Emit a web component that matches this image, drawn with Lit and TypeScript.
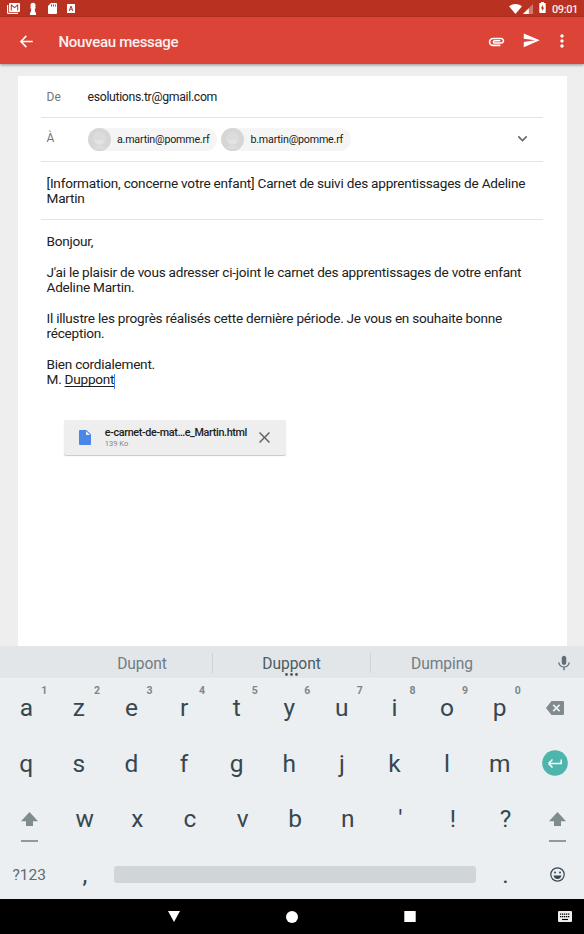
import { LitElement, html, css, svg } from "lit";
import { customElement } from "lit/decorators.js";

const icon = (cls: string, box: string, body: unknown) =>
  html`<svg class="ic ${cls}" viewBox=${box} aria-hidden="true">${body}</svg>`;

const iconStyles = css`
  :host { display: block; box-sizing: border-box; font-family: Roboto, sans-serif; }
  * { box-sizing: border-box; }
  .ic { display: block; flex: none; fill: currentColor; overflow: visible; }
`;

@customElement("status-bar")
class StatusBar extends LitElement {
  static styles = [iconStyles, css`
    .bar { height: 17px; background: #b93221; color: #fff; display: flex; align-items: center; padding: 0 6px 0 7px; }
    .mail { width: 13px; height: 11px; margin-right: 10px; }
    .pawn { width: 6px; height: 12px; margin-right: 11.500px; margin-top: 1px; }
    .sd { width: 9px; height: 11px; margin-right: 10.500px; }
    .app { width: 8px; height: 9px; }
    .gap { flex: 1; }
    .wifi { width: 13px; height: 10px; margin-right: 1px; }
    .cell { width: 10px; height: 10px; margin-right: 6px; margin-top: 1px; }
    .batt { width: 7px; height: 11px; margin: -1.500px 6px 0 0; }
    .time { font-size: 11px; font-weight: 500; line-height: 17px; letter-spacing: -0.400px; color: #fbeceb; width: 26px; padding-top: 1px; white-space: nowrap; }
  `];
  render() {
    return html`<div class="bar">
      ${icon("mail", "0 0 13 11", svg`<path d="M0 2h1.200v7.800H11V11H1.200Q0 11 0 9.800z"/><path fill-rule="evenodd" d="M3 0h9q1 0 1 1v7q0 1-1 1H3q-1 0-1-1V1q0-1 1-1zM3.800 7.600h1V3l2.700 2.200L10.200 3v4.600h1V1.600h-.8L7.500 3.900 4.600 1.600h-.8z"/>`)}
      ${icon("pawn", "0 0 6 12", svg`<circle cx="3" cy="2.300" r="2.500"/><path d="M.4 4h5.200v1.500H4.800L5 8.500l1 1.500v2H0v-2l1-1.500.2-3H.4z"/>`)}
      ${icon("sd", "0 0 9 11", svg`<path fill-rule="evenodd" d="M3 0h5q1 0 1 1v9q0 1-1 1H1q-1 0-1-1V3zM3 1.400v2h1v-2zM5 1.400v2h1v-2zM7 1.400v2h.9v-2z"/>`)}
      ${icon("app", "0 0 8 9", svg`<path fill-rule="evenodd" d="M.5 0h7q.5 0 .5.500v8q0 .5-.5.500h-7Q0 9 0 8.500v-8Q0 0 .5 0zM3.400 2 1.700 7h1l.4-1.200h1.800L5.300 7h1L4.600 2zM4 3.200l.5 1.700h-1z"/>`)}
      <span class="gap"></span>
      ${icon("wifi", "0 0 13 10", svg`<path d="M0 2.200Q6.500-2.200 13 2.200L6.500 10z"/>`)}
      ${icon("cell", "0 0 10 10", svg`<path d="M10 0v10H0z" opacity=".35"/><path d="M5.800 4.200V10H0z"/>`)}
      ${icon("batt", "0 0 7 12", svg`<path fill-rule="evenodd" d="M2 0h3v1.200h1.300q.7 0 .7.700v9.400q0 .7-.7.700H.7Q0 12 0 11.300V1.900q0-.7.7-.7H2zM4 3 1.700 7h1.400v3l2.300-4H4z"/>`)}
      <span class="time">09:01</span>
    </div>`;
  }
}

@customElement("compose-toolbar")
class ComposeToolbar extends LitElement {
  static styles = [iconStyles, css`
    :host { position: relative; z-index: 1; }
    .bar { height: 47px; background: #db4437; color: #fff; display: flex; align-items: center; padding: 1px 12px 0 15px; box-shadow: 0 1px 3px rgba(0, 0, 0, .4); }
    .back { width: 23px; height: 23px; }
    .title { flex: 1; margin-left: 20.500px; padding-top: 2px; font-size: 15px; font-weight: 500; line-height: 20px; letter-spacing: -0.300px; color: #fdf0ee; }
    .clip { width: 17px; height: 17px; margin-right: 17.500px; }
    .send { width: 17.500px; height: 17.500px; margin-right: 12px; }
    .more { width: 20px; height: 20px; margin-top: -1px; }
  `];
  render() {
    return html`<div class="bar">
      ${icon("back", "0 0 24 24", svg`<path d="M18.500 11.200H8.100l4.300-4.400-1.100-1.200L5 12l6.300 6.400 1.100-1.200-4.300-4.300h10.400z"/>`)}
      <span class="title">Nouveau message</span>
      ${icon("clip", "1 1 22 22", svg`<path d="M2 12.500C2 9.460 4.460 7 7.500 7H18c2.210 0 4 1.790 4 4s-1.790 4-4 4H9.500C8.120 15 7 13.880 7 12.500S8.120 10 9.500 10H17v2H9.410c-.55 0-.55 1 0 1H18c1.100 0 2-.9 2-2s-.9-2-2-2H7.500C5.570 9 4 10.570 4 12.500S5.570 16 7.500 16H17v2H7.500C4.460 18 2 15.540 2 12.500z"/>`)}
      ${icon("send", "1 1 23 23", svg`<path d="M2.010 21 23 12 2.010 3 2 10l15 2-15 2z"/>`)}
      ${icon("more", "0 0 24 24", svg`<path d="M12 8c1.100 0 2-.9 2-2s-.9-2-2-2-2 .9-2 2 .9 2 2 2zm0 2c-1.100 0-2 .9-2 2s.9 2 2 2 2-.9 2-2-.9-2-2-2zm0 6c-1.100 0-2 .9-2 2s.9 2 2 2 2-.9 2-2-.9-2-2-2z"/>`)}
    </div>`;
  }
}

@customElement("message-card")
class MessageCard extends LitElement {
  static styles = [iconStyles, css`
    .card { height: 570px; margin: 12px 17.500px 0; padding: 0 24px 0 23.500px; background: #fff; font-size: 13.600px; line-height: 15.330px; letter-spacing: -0.240px; color: #212121; }
    .row { display: flex; align-items: center; border-bottom: 1px solid #e4e4e4; padding-left: 5.500px; }
    .from { height: 42px; padding-top: 2px; }
    .to { height: 44px; }
    .subject { height: 58px; padding-top: 1.500px; letter-spacing: -0.220px; }
    .label { width: 41px; color: #757575; font-size: 12px; letter-spacing: 0; }
    .to .label { margin-top: -2px; }
    .addr { font-size: 12.300px; letter-spacing: -0.330px; }
    .chips { display: flex; gap: 3.500px; flex: 1; }
    .chip { display: flex; align-items: center; height: 23px; border-radius: 12px; background: #f5f5f5; font-size: 10.700px; letter-spacing: -0.210px; padding-right: 8px; white-space: nowrap; }
    .face { width: 23px; height: 23px; margin-right: 6.500px; }
    .chev { width: 19px; height: 19px; margin-right: 11px; color: #666; margin-top: -3px; }
    .body { padding: 14px 0 0 5.500px; height: 167.300px; }
    .typo { text-decoration: underline; text-underline-offset: 2px; text-decoration-thickness: 1px; text-decoration-skip-ink: none; }
    .caret { display: inline-block; width: 1px; height: 15px; background: #4285f4; vertical-align: -2px; margin: -3px 0; }
    .file { display: flex; align-items: center; width: 222px; height: 35px; margin: 32.700px 0 0 22.500px; background: #eee; border-radius: 2px; box-shadow: 0 1px 1px rgba(0, 0, 0, .22); padding-left: 15px; }
    .doc { width: 12px; height: 15px; color: #4a86e8; margin-right: 14.300px; }
    .meta { width: 154.700px; margin-top: -1px; white-space: nowrap; }
    .name { font-size: 10.800px; font-weight: 500; line-height: 13px; letter-spacing: -0.370px; }
    .size { font-size: 7.500px; line-height: 9px; letter-spacing: 0; color: #858585; }
    .close { width: 11px; height: 11px; color: #666; }
  `];
  private chip(address: string) {
    return html`<span class="chip">
      ${icon("face", "0 0 23 23", svg`<circle cx="11.500" cy="11.500" r="11.500" fill="#d6d6d6"/><circle cx="11.500" cy="10.500" r="6.500" fill="#dcdcdc"/><path d="M6.500 12h10q-1 4.500-5 4.500t-5-4.500z" fill="#e3e3e3"/><path d="M5 19q6.500-3.500 13 0-6.500 4.500-13 0z" fill="#dddddd"/>`)}${address}</span>`;
  }
  render() {
    return html`<div class="card">
      <div class="row from"><span class="label">De</span><span class="addr">esolutions.tr@gmail.com</span></div>
      <div class="row to"><span class="label">À</span>
        <span class="chips">${this.chip("a.martin@pomme.rf")}${this.chip("b.martin@pomme.rf")}</span>
        ${icon("chev", "0 0 24 24", svg`<path d="M16.600 8.600 12 13.200 7.400 8.600 6 10l6 6 6-6z"/>`)}</div>
      <div class="row subject"><span>[Information, concerne votre enfant] Carnet de suivi des apprentissages de Adeline<br>Martin</span></div>
      <div class="body">Bonjour,<br><br>J'ai le plaisir de vous adresser ci-joint le carnet des apprentissages de votre enfant<br>Adeline Martin.<br><br>Il illustre les progrès réalisés cette dernière période. Je vous en souhaite bonne<br>réception.<br><br>Bien cordialement.<br>M. <span class="typo">Duppont</span><span class="caret"></span></div>
      <div class="file">
        ${icon("doc", "0 0 12 15", svg`<path fill-rule="evenodd" d="M1 0h6.500L12 4.500V14q0 1-1 1H1q-1 0-1-1V1q0-1 1-1zM7 1v4h4z"/>`)}
        <div class="meta"><div class="name">e-carnet-de-mat…e_Martin.html</div><div class="size">139 Ko</div></div>
        ${icon("close", "0 0 11 11", svg`<path d="M1.100 0 5.500 4.400 9.900 0 11 1.100 6.600 5.500 11 9.900 9.900 11 5.500 6.600 1.100 11 0 9.900 4.400 5.500 0 1.100z"/>`)}
      </div>
    </div>`;
  }
}

@customElement("soft-keyboard")
class SoftKeyboard extends LitElement {
  static styles = [iconStyles, css`
    .pad { height: 253px; background: #ebeff2; color: #37474f; }
    .suggest { height: 33px; background: #e2e6e9; border-bottom: 1px solid #eff2f4; display: flex; align-items: center; padding: 1px 13px 0 71px; font-size: 15.600px; color: #717d83; }
    .word { width: 142px; line-height: 18px; padding-top: 2px; text-align: center; letter-spacing: -0.080px; }
    .word.mid { width: 159px; margin-left: -1px; border: solid #cdd2d5; border-width: 0 1px; color: #4d5b62; position: relative; }
    .dots { position: absolute; left: 72px; top: 20px; width: 13px; height: 3px; }
    .mic { width: 14px; height: 14px; margin-left: auto; color: #5f6d74; }
    .row { display: flex; height: 55.500px; align-items: flex-start; }
    .key { width: 52.600px; flex: none; text-align: center; font-size: 24.500px; line-height: 28px; padding-top: 15px; position: relative; }
    .hint { position: absolute; left: 38.300px; top: 6px; width: 12px; font-size: 10.500px; line-height: 12px; font-weight: 700; color: #7b878c; }
    .side { flex: 1; display: flex; flex-direction: column; align-items: center; color: #7f8b8f; }
    .first { flex: none; width: 58.500px; }
    .del { width: 18px; height: 14px; margin-top: 22px; }
    .enter { width: 26px; height: 26px; margin-top: 15.700px; }
    .shift { width: 17px; height: 14px; margin-top: 21.500px; }
    .line { width: 17px; height: 1.500px; background: #92999d; margin-top: 14.500px; }
    .sym { font-size: 15.500px; line-height: 20px; margin-top: 19px; color: #5d6b71; }
    .space { width: 362px; height: 17px; border-radius: 3px; background: #d0d5d8; margin: 20.500px 3px 0; }
    .smile { width: 15px; height: 15px; margin-top: 21px; color: #37474f; }
  `];
  private key(k: string, hint = "") {
    return html`<span class="key">${k}${hint ? html`<span class="hint">${hint}</span>` : ""}</span>`;
  }
  private shift(cls: string) {
    return html`<span class="side ${cls}">${icon("shift", "0 0 17 14", svg`<path d="M8.500 0 17 9.200h-5V14H5V9.200H0z"/>`)}<span class="line"></span></span>`;
  }
  render() {
    return html`<div class="pad">
      <div class="suggest"><span class="word">Dupont</span><span class="word mid">Duppont${icon("dots", "0 0 13 3", svg`<circle cx="1.500" cy="1.500" r="1.400"/><circle cx="6.500" cy="1.500" r="1.400"/><circle cx="11.500" cy="1.500" r="1.400"/>`)}</span><span class="word">Dumping</span>
        ${icon("mic", "2 2 20 20", svg`<path d="M12 15c1.700 0 3.200-1.400 3.200-3.200V4.800C15.200 3 13.700 1.500 12 1.500S8.800 3 8.800 4.800v7C8.800 13.600 10.300 15 12 15zm6.500-4c0 3.500-3 6-6.500 6s-6.500-2.500-6.500-6H3.800c0 4 3.200 7 7.200 7.600V22.500h2v-3.900c4-.6 7.200-3.600 7.200-7.600z"/>`)}</div>
      <div class="row">${[..."azertyuiop"].map((k, i) => this.key(k, String((i + 1) % 10)))}
        <span class="side">${icon("del", "0 0 18 14", svg`<path fill-rule="evenodd" d="M5.500 0H17q1 0 1 1v12q0 1-1 1H5.500L0 7zM7.800 3.200 6.600 4.400 9.200 7 6.600 9.600l1.200 1.200 2.600-2.600 2.600 2.600 1.200-1.200L11.600 7l2.600-2.600L13 3.200l-2.600 2.600z"/>`)}</span></div>
      <div class="row">${[..."qsdfghjklm"].map((k) => this.key(k))}
        <span class="side">${icon("enter", "0 0 26 26", svg`<circle cx="13" cy="13" r="12.800" fill="#4db6ac"/><path d="M6.500 13.500 10.500 9.500M6.500 13.500l4 4M6.500 13.500H19.200V9.500" fill="none" stroke="#fff" stroke-width="1.500"/>`)}</span></div>
      <div class="row">${this.shift("first")}${[..."wxcvbn'!?"].map((k) => this.key(k))}${this.shift("")}</div>
      <div class="row"><span class="side first"><span class="sym">?123</span></span>${this.key(",")}<span class="space"></span>${this.key(".")}
        <span class="side">${icon("smile", "0 0 15 15", svg`<circle cx="7.500" cy="7.500" r="6.700" fill="none" stroke="currentColor" stroke-width="1.200"/><circle cx="5" cy="5.500" r="1"/><circle cx="10" cy="5.500" r="1"/><path d="M3.500 8.500h8q-1 3.500-4 3.500t-4-3.500z"/>`)}</span></div>
    </div>`;
  }
}

@customElement("nav-bar")
class NavBar extends LitElement {
  static styles = [iconStyles, css`
    .bar { height: 35px; background: #000; color: #fff; display: flex; align-items: center; padding: 0 12px 0 168px; }
    .back { width: 12px; height: 11px; }
    .home { width: 12px; height: 12px; margin-left: 106px; }
    .recent { width: 12px; height: 11px; margin-left: 106px; }
    .kbd { width: 14px; height: 11px; margin-left: auto; }
  `];
  render() {
    return html`<div class="bar">
      ${icon("back", "0 0 12 11", svg`<path d="M0 0h12L6 11z"/>`)}
      ${icon("home", "0 0 12 12", svg`<circle cx="6" cy="6" r="6"/>`)}
      ${icon("recent", "0 0 12 11", svg`<rect x=".3" width="11.400" height="11" rx=".5"/>`)}
      ${icon("kbd", "0 0 14 11", svg`<rect width="14" height="11" rx="1" fill="#eee"/><path d="M2 3.200h10M2 5.600h10" stroke="#000" stroke-width="1.200" stroke-dasharray="1.300 .7"/><path d="M4 8.500h6" stroke="#000" stroke-width="1.100"/>`)}
    </div>`;
  }
}

@customElement("app-root")
class AppRoot extends LitElement {
  static styles = css`
    :host { display: flex; flex-direction: column; width: 584px; height: 934px; overflow: hidden; background: #eee; }
  `;
  render() {
    return html`<status-bar></status-bar><compose-toolbar></compose-toolbar><message-card></message-card><soft-keyboard></soft-keyboard><nav-bar></nav-bar>`;
  }
}
